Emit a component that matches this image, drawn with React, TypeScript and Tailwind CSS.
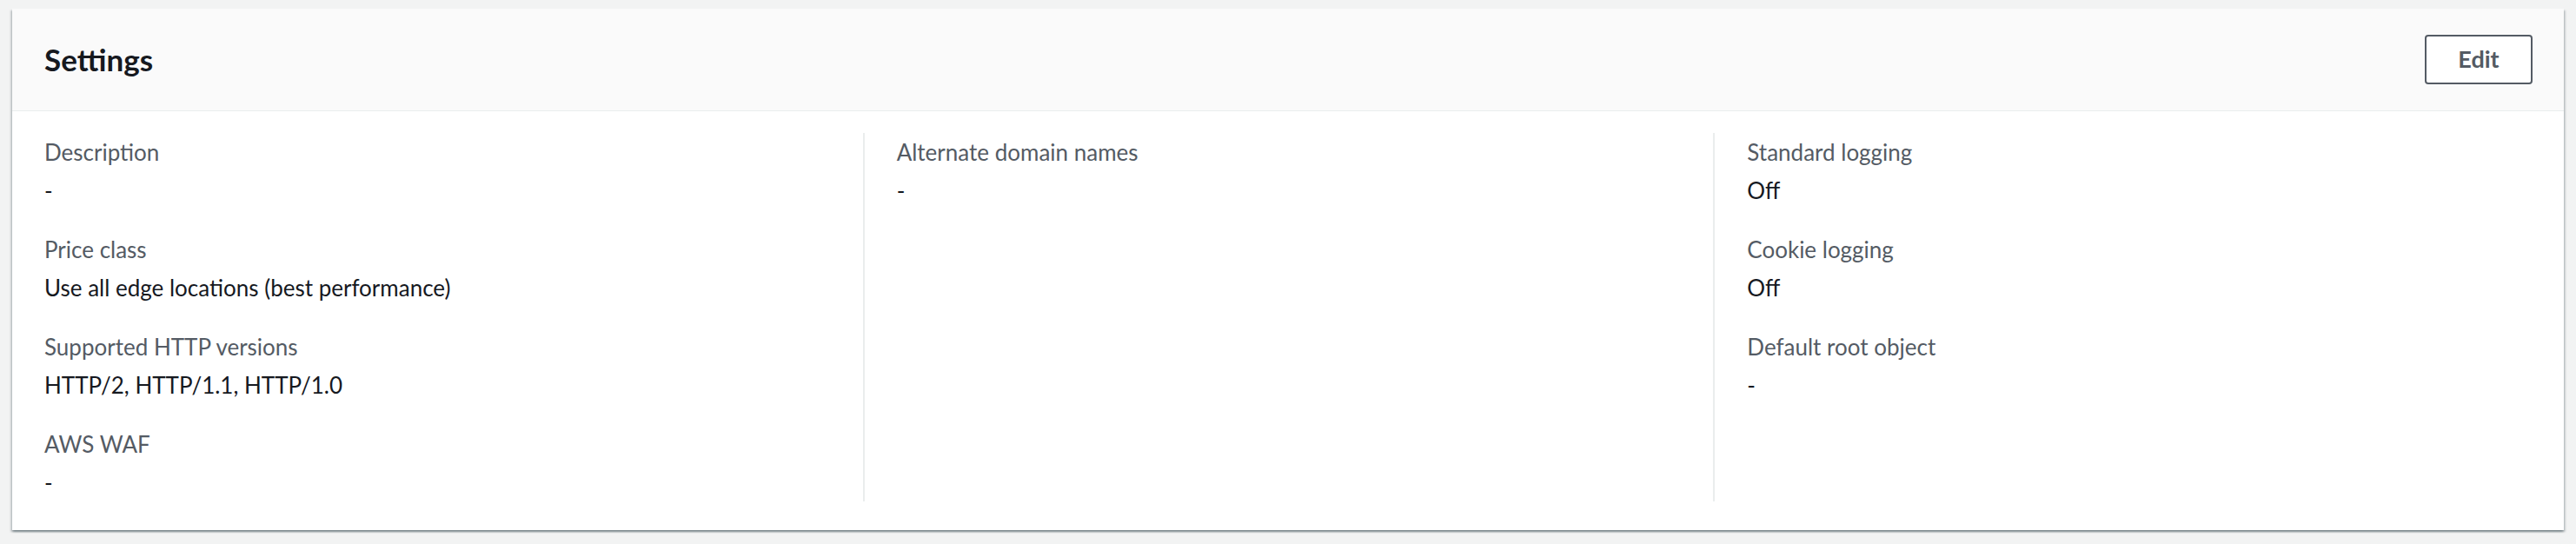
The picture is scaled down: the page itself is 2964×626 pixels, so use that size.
import React from 'react';

interface Field {
  label: string;
  value: string;
}

const columns: Field[][] = [
  [
    { label: 'Description', value: '-' },
    { label: 'Price class', value: 'Use all edge locations (best performance)' },
    { label: 'Supported HTTP versions', value: 'HTTP/2, HTTP/1.1, HTTP/1.0' },
    { label: 'AWS WAF', value: '-' },
  ],
  [{ label: 'Alternate domain names', value: '-' }],
  [
    { label: 'Standard logging', value: 'Off' },
    { label: 'Cookie logging', value: 'Off' },
    { label: 'Default root object', value: '-' },
  ],
];

function KeyValue({ label, value }: Field) {
  return (
    <div>
      <div className="text-[26px] leading-[44px] text-[#545b64]">{label}</div>
      <div className="text-[26px] leading-[44px] text-[#16191f]">{value}</div>
    </div>
  );
}

export default function App() {
  return (
    <div className="min-h-screen bg-[#f2f3f3] px-[14px] pt-[10px] pb-[16px] font-['Lato',sans-serif]">
      <div className="bg-white shadow-[0_2px_2px_0_rgba(0,28,36,0.3),2px_2px_2px_0_rgba(0,28,36,0.15),-2px_2px_2px_0_rgba(0,28,36,0.15)]">
        <div className="flex h-[118px] items-center justify-between border-b border-[#eaeded] bg-[#fafafa] pl-[37px] pr-[36px]">
          <h2 className="text-[35px] font-bold leading-none text-[#16191f]">Settings</h2>
          <button className="h-[57px] w-[124px] rounded-[4px] border-2 border-[#545b64] bg-white text-[27px] font-bold text-[#545b64]">
            Edit
          </button>
        </div>
        <div className="grid grid-cols-3 pt-[25px] pb-[33px]">
          {columns.map((fields, i) => (
            <div
              key={i}
              className={`flex flex-col gap-[24px] pl-[37px] ${i > 0 ? 'border-l-2 border-[#eaeded]' : ''}`}
            >
              {fields.map((f) => (
                <KeyValue key={f.label} {...f} />
              ))}
            </div>
          ))}
        </div>
      </div>
    </div>
  );
}
